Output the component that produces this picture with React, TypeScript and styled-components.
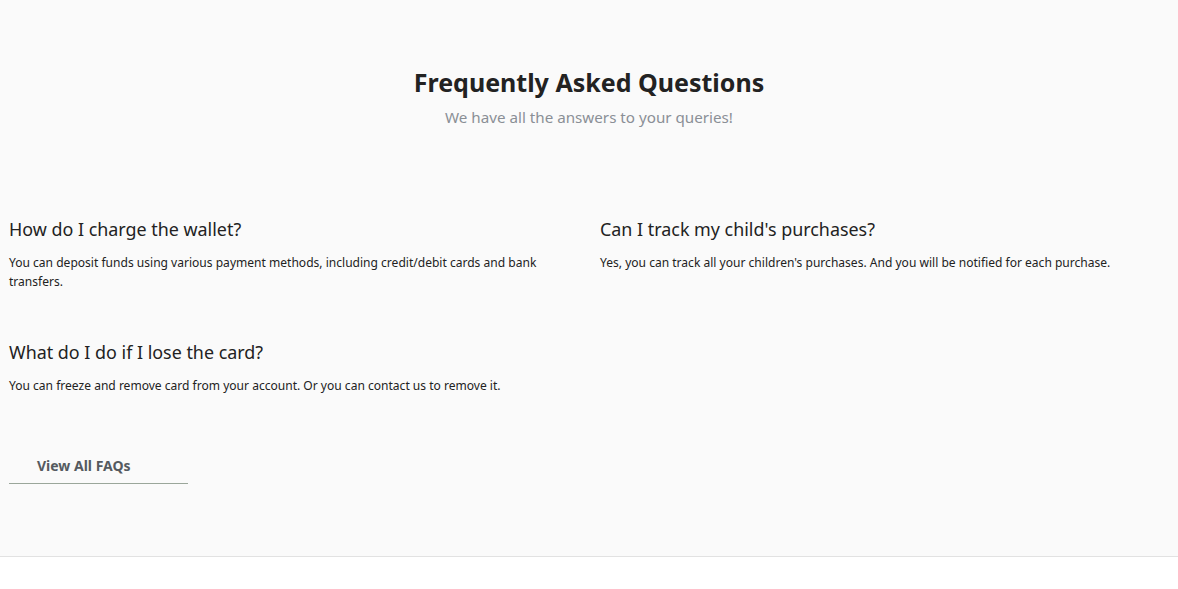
import React from "react";
import styled, { createGlobalStyle } from "styled-components";

const Global = createGlobalStyle`
  html, body { margin: 0; padding: 0; background: #ffffff; }
  body { font-family: "Noto Sans", "Open Sans", sans-serif; color: #222; }
  * { box-sizing: border-box; }
`;

const Section = styled.section`
  background: #fafafa;
  border-bottom: 1px solid #e2e2e2;
  height: 557px;
  padding-top: 63px;
`;

const Header = styled.header`
  text-align: center;
`;

const Title = styled.h2`
  margin: 0;
  font-size: 25px;
  line-height: 38px;
  font-weight: 700;
  color: #222;
`;

const Subtitle = styled.p`
  margin: 5px 0 0;
  font-size: 15.2px;
  line-height: 22px;
  color: #8a8f96;
`;

const Grid = styled.div`
  display: grid;
  grid-template-columns: 1fr 1fr;
  column-gap: 22px;
  row-gap: 48px;
  padding: 0 9px;
  margin-top: 88px;
`;

const Item = styled.div``;

const Question = styled.h3`
  margin: 0;
  font-size: 17.9px;
  line-height: 26px;
  font-weight: 400;
  color: #222;
`;

const Answer = styled.p`
  margin: 11px 0 0;
  font-size: 12.05px;
  line-height: 19px;
  color: #222;
`;

const ButtonRow = styled.div`
  padding: 0 9px;
  margin-top: 59px;
`;

const ViewAll = styled.a`
  display: block;
  width: 179px;
  padding: 0 0 5px 28px;
  font-size: 14px;
  line-height: 24px;
  font-weight: 700;
  color: #555a60;
  text-decoration: none;
  border-bottom: 1px solid #9aa69a;
`;

const faqs = [
  {
    q: "How do I charge the wallet?",
    a: "You can deposit funds using various payment methods, including credit/debit cards and bank transfers.",
  },
  {
    q: "Can I track my child's purchases?",
    a: "Yes, you can track all your children's purchases. And you will be notified for each purchase.",
  },
  {
    q: "What do I do if I lose the card?",
    a: "You can freeze and remove card from your account. Or you can contact us to remove it.",
  },
];

export default function App() {
  return (
    <>
      <Global />
      <Section>
        <Header>
          <Title>Frequently Asked Questions</Title>
          <Subtitle>We have all the answers to your queries!</Subtitle>
        </Header>
        <Grid>
          {faqs.map((f) => (
            <Item key={f.q}>
              <Question>{f.q}</Question>
              <Answer>{f.a}</Answer>
            </Item>
          ))}
        </Grid>
        <ButtonRow>
          <ViewAll href="#">View All FAQs</ViewAll>
        </ButtonRow>
      </Section>
    </>
  );
}
